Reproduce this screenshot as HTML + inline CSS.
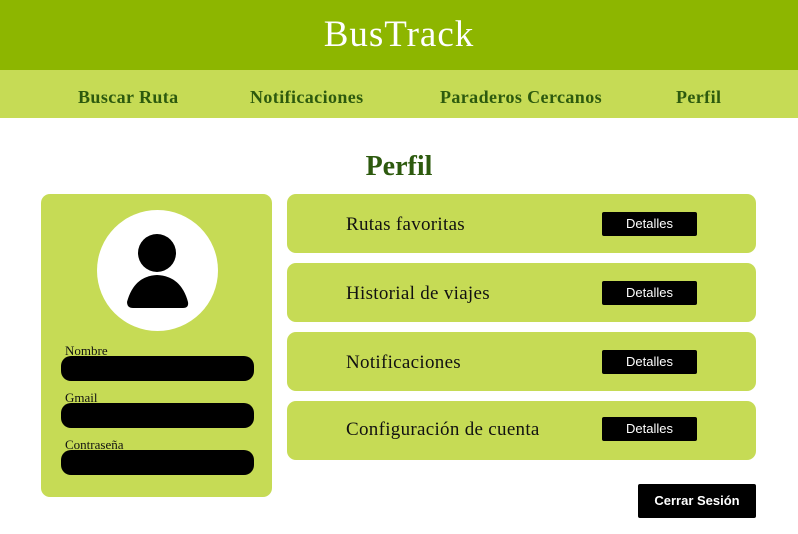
<!DOCTYPE html>
<html><head><meta charset="utf-8"><style>
body{margin:0;width:798px;height:534px;background:#fff;font-family:"Liberation Serif",serif;position:relative;overflow:hidden}
.hdr{position:absolute;left:0;top:0;width:798px;height:70px;background:#8db600;color:#fff;font-size:37px;letter-spacing:1px;text-align:center;line-height:70px}
.nav{position:absolute;left:0;top:70px;width:798px;height:48px;background:#c6db55}
.nav span{position:absolute;top:0;line-height:55px;font-size:18px;color:#2d5a0e;font-weight:bold;letter-spacing:0.4px}
.ttl{position:absolute;left:0;width:798px;top:151px;text-align:center;font-size:28px;color:#2d5a0e;font-weight:bold}
.lc{position:absolute;left:41px;top:194px;width:231px;height:303px;background:#c6db55;border-radius:9px}
.circ{position:absolute;left:97px;top:210px;width:121px;height:121px;border-radius:50%;background:#fff}
.lab{position:absolute;left:65px;font-size:13px;color:#111}
.bar{position:absolute;left:61px;width:193px;height:25px;background:#000;border-radius:10px}
.rc{position:absolute;left:287px;width:469px;height:59px;background:#c6db55;border-radius:9px}
.rc span{position:absolute;left:59px;top:0;line-height:62px;font-size:19px;letter-spacing:0.3px;color:#111}
.rc b{position:absolute;left:315px;top:18px;width:95px;height:24px;background:#000;color:#fff;font:normal 13px "Liberation Sans",sans-serif;text-align:center;line-height:24px;border-radius:2px}
.out{position:absolute;left:638px;top:484px;width:118px;height:34px;background:#000;color:#fff;font:bold 13px "Liberation Sans",sans-serif;text-align:center;line-height:34px;border-radius:2px}
</style></head><body>
<div class="hdr">BusTrack</div>
<div class="nav"><span style="left:78px">Buscar Ruta</span><span style="left:250px">Notificaciones</span><span style="left:440px">Paraderos Cercanos</span><span style="left:676px">Perfil</span></div>
<div class="ttl">Perfil</div>
<div class="lc"></div>
<div class="circ"><svg width="121" height="121" viewBox="0 0 121 121"><circle cx="60" cy="43" r="19"/><path d="M30 92 Q30 98 36 98 L86 98 Q92 98 91 92 Q84 66 60 65 Q37 66 30 92Z"/></svg></div>
<div class="lab" style="top:343px">Nombre</div><div class="bar" style="top:356px"></div>
<div class="lab" style="top:390px">Gmail</div><div class="bar" style="top:403px"></div>
<div class="lab" style="top:437px">Contraseña</div><div class="bar" style="top:450px"></div>
<div class="rc" style="top:194px"><span>Rutas favoritas</span><b>Detalles</b></div>
<div class="rc" style="top:263px"><span>Historial de viajes</span><b>Detalles</b></div>
<div class="rc" style="top:332px"><span>Notificaciones</span><b>Detalles</b></div>
<div class="rc" style="top:401px"><span style="line-height:57px">Configuración de cuenta</span><b style="top:16px">Detalles</b></div>
<div class="out">Cerrar Sesión</div>
</body></html>
